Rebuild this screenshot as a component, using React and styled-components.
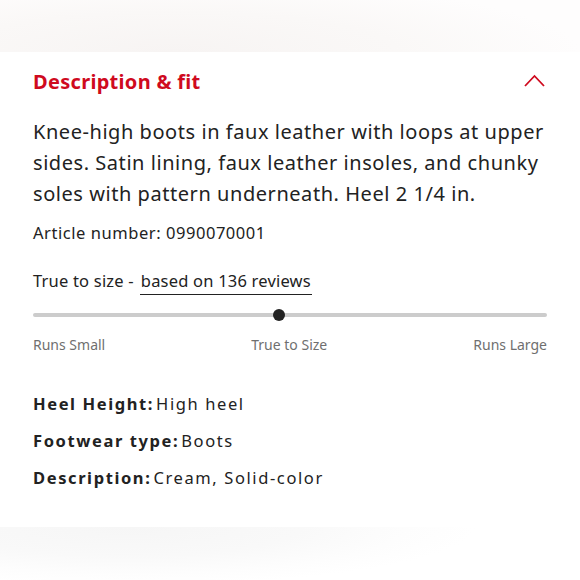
import React from "react";
import styled, { createGlobalStyle } from "styled-components";

const Global = createGlobalStyle`
  html, body { margin: 0; padding: 0; background: #ffffff; }
  body { font-family: "Noto Sans", "Open Sans", sans-serif; color: #222222; }
`;

const Page = styled.div`
  width: 580px;
  height: 580px;
  display: flex;
  flex-direction: column;
  overflow: hidden;
  background: #ffffff;
`;

const TopBand = styled.div`
  height: 52px;
  flex: none;
  background: radial-gradient(ellipse 70% 140% at 30% 100%, #f7f4f3 0%, #faf8f7 55%, #fefdfd 100%);
`;

const Panel = styled.section`
  flex: 1;
  padding: 0 33px;
  display: flex;
  flex-direction: column;
`;

const Header = styled.div`
  display: flex;
  align-items: center;
  justify-content: space-between;
  height: 58px;
`;

const Title = styled.h2`
  margin: 0;
  font-size: 20px;
  font-weight: 700;
  color: #cf0a1e;
  letter-spacing: 0.3px;
`;

const Chevron = styled.svg`
  width: 21px;
  height: 13px;
  margin-right: 2px;
  margin-top: -2px;
`;

const Body = styled.p`
  margin: 6px 0 0;
  font-size: 20px;
  line-height: 31px;
  letter-spacing: 0.55px;
  color: #222222;
`;

const Article = styled.p`
  margin: 13px 0 0;
  font-size: 16.5px;
  line-height: 22px;
  letter-spacing: 0.55px;
  color: #222222;
`;

const FitLine = styled.p`
  margin: 26px 0 0;
  font-size: 16.5px;
  line-height: 22px;
  letter-spacing: 0.2px;
  color: #222222;
`;

const ReviewLink = styled.a`
  margin-left: 6px;
  padding: 0 1px 2px;
  color: #222222;
  text-decoration: none;
  border-bottom: 1.5px solid #222222;
`;

const Track = styled.div`
  position: relative;
  margin-top: 21px;
  height: 4px;
  border-radius: 2px;
  background: #cccccc;
`;

const Thumb = styled.span`
  position: absolute;
  top: 50%;
  width: 12px;
  height: 12px;
  border-radius: 50%;
  background: #222222;
  transform: translate(-50%, -50%);
`;

const Labels = styled.div`
  display: flex;
  justify-content: space-between;
  margin-top: 18px;
  font-size: 14px;
  line-height: 20px;
  color: #6f6f6f;
`;

const Specs = styled.dl`
  margin: 38px 0 0;
  display: flex;
  flex-direction: column;
  gap: 15px;
`;

const SpecRow = styled.div`
  display: flex;
  align-items: baseline;
  font-size: 16.5px;
  line-height: 22px;
  letter-spacing: 1.6px;
  color: #222222;
`;

const SpecLabel = styled.dt`
  font-weight: 700;
  margin: 0 2px 0 0;
`;

const SpecValue = styled.dd`
  margin: 0;
`;

const BottomBand = styled.div`
  height: 53px;
  flex: none;
  background: radial-gradient(ellipse 60% 110% at 22% 0%, #f6f6f6 0%, #f9f9f9 50%, #fdfdfd 80%, #ffffff 100%);
`;

const specs = [
  ["Heel Height:", "High heel"],
  ["Footwear type:", "Boots"],
  ["Description:", "Cream, Solid-color"],
];

export default function App() {
  const fit = 47.8;
  return (
    <>
      <Global />
      <Page>
        <TopBand />
        <Panel>
          <Header>
            <Title>Description &amp; fit</Title>
            <Chevron viewBox="0 0 21 13" fill="none">
              <path d="M1 12 L10.5 2 L20 12" stroke="#cf0a1e" strokeWidth="1.8" />
            </Chevron>
          </Header>
          <Body>
            Knee-high boots in faux leather with loops at upper
            <br />
            sides. Satin lining, faux leather insoles, and chunky
            <br />
            soles with pattern underneath. Heel 2 1/4 in.
          </Body>
          <Article>Article number: 0990070001</Article>
          <FitLine>
            True to size -<ReviewLink href="#">based on 136 reviews</ReviewLink>
          </FitLine>
          <Track>
            <Thumb style={{ left: `${fit}%` }} />
          </Track>
          <Labels>
            <span>Runs Small</span>
            <span>True to Size</span>
            <span>Runs Large</span>
          </Labels>
          <Specs>
            {specs.map(([k, v]) => (
              <SpecRow key={k}>
                <SpecLabel>{k}</SpecLabel>
                <SpecValue>{v}</SpecValue>
              </SpecRow>
            ))}
          </Specs>
        </Panel>
        <BottomBand />
      </Page>
    </>
  );
}
